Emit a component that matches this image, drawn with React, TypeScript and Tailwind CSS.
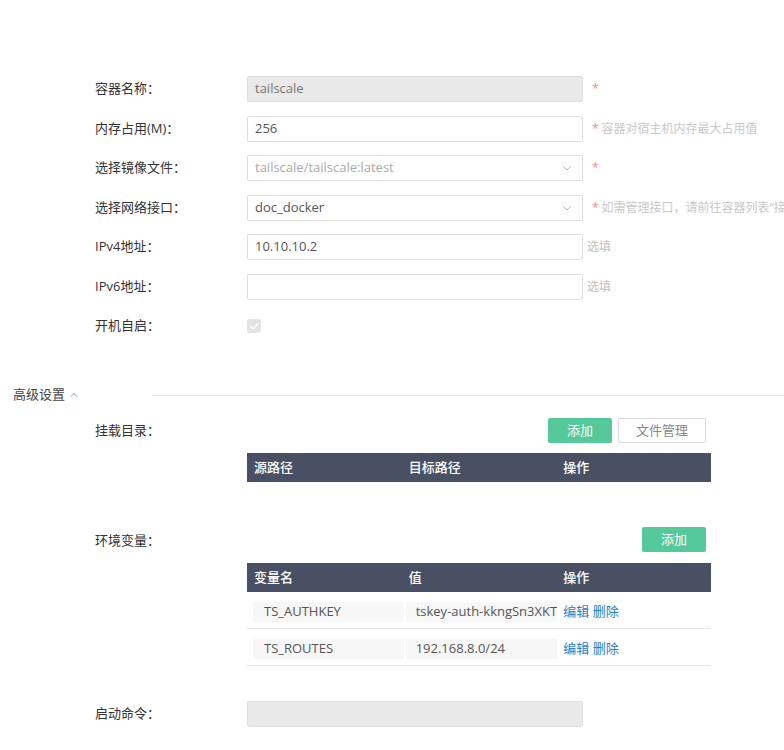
import { ChevronDown, ChevronUp, Check } from 'lucide-react';

const font = { fontFamily: '"Open Sans", "Noto Sans CJK SC", sans-serif' };

function Row({ label, children }: { label: string; children: React.ReactNode }) {
    return (
        <div className="flex h-[26px] items-center whitespace-nowrap">
            <div className="w-[152px] shrink-0 text-[13px] text-[#333]">{label}</div>
            {children}
        </div>
    );
}

function Req({ text }: { text?: string }) {
    return (
        <span className="ml-[9px] text-[12px] text-[#c8c8c8]">
            <span className="text-[#f78989]">*</span>
            {text && <span className="ml-[3px]">{text}</span>}
        </span>
    );
}

function Box({ value, disabled, select, dim }: { value?: string; disabled?: boolean; select?: boolean; dim?: boolean }) {
    return (
        <div
            className={`flex h-[26px] w-[336px] shrink-0 items-center justify-between rounded-[2px] border border-[#dedede] px-[7px] text-[13px] ${
                disabled ? 'bg-[#e9e9e9] text-[#777]' : 'bg-white'
            } ${dim ? 'text-[#aaa]' : 'text-[#555]'}`}
        >
            <span>{value}</span>
            {select && <ChevronDown className="h-4 w-4 text-[#aaa]" strokeWidth={1.2} />}
        </div>
    );
}

function Optional() {
    return <span className="ml-[4px] text-[12px] text-[#c0c0c0]">选填</span>;
}

function GreenBtn() {
    return (
        <button className="h-[25px] w-[64px] rounded-[2px] bg-[#55c99a] text-[13px] text-white">添加</button>
    );
}

function Header({ cols }: { cols: string[] }) {
    return (
        <div className="grid h-[29px] grid-cols-3 items-center bg-[#4a5064] text-[13px] font-medium text-white">
            {cols.map((c) => (
                <div key={c} className="pl-[7px]">{c}</div>
            ))}
        </div>
    );
}

function EnvRow({ name, value }: { name: string; value: string }) {
    return (
        <div className="grid h-[37px] grid-cols-3 items-center border-b border-[#e3e3e3] pt-[3px] text-[13px] text-[#555]">
            <div className="min-w-0 pl-[6px]">
                <div className="flex h-[20px] w-[151px] items-center overflow-hidden whitespace-nowrap bg-[#f7f7f7] pl-[11px]">{name}</div>
            </div>
            <div className="min-w-0 pl-[4px]">
                <div className="flex h-[20px] w-[151px] items-center overflow-hidden whitespace-nowrap bg-[#f7f7f7] pl-[10px]">{value}</div>
            </div>
            <div className="pl-[7px] text-[#1f80cc]">编辑 删除</div>
        </div>
    );
}

export default function App() {
    return (
        <div className="h-[750px] w-[784px] overflow-hidden bg-white" style={font}>
            <div className="flex flex-col gap-[13.5px] pl-[95px] pt-[76px]">
                <Row label="容器名称：">
                    <Box value="tailscale" disabled />
                    <Req />
                </Row>
                <Row label="内存占用(M)：">
                    <Box value="256" />
                    <Req text="容器对宿主机内存最大占用值" />
                </Row>
                <Row label="选择镜像文件：">
                    <Box value="tailscale/tailscale:latest" select dim />
                    <Req />
                </Row>
                <Row label="选择网络接口：">
                    <Box value="doc_docker" select />
                    <Req text="如需管理接口，请前往容器列表“接口管理”中设置" />
                </Row>
                <Row label="IPv4地址：">
                    <Box value="10.10.10.2" />
                    <Optional />
                </Row>
                <Row label="IPv6地址：">
                    <Box />
                    <Optional />
                </Row>
                <Row label="开机自启：">
                    <div className="flex h-[14px] w-[14px] items-center justify-center rounded-[2px] bg-[#e3e3e3]">
                        <Check className="h-[11px] w-[11px] text-white" strokeWidth={3} />
                    </div>
                </Row>
            </div>

            <div className="mt-[46px] flex h-[20px] items-center">
                <div className="flex w-[152px] shrink-0 items-center pl-[13px] text-[13px] text-[#444]">
                    高级设置
                    <ChevronUp className="ml-[3px] h-[12px] w-[12px] text-[#3b8ad9]" strokeWidth={1.6} />
                </div>
                <div className="h-px flex-1 bg-[#e6e6e6]" />
            </div>

            <div className="pl-[95px] pr-[73px]">
                <div className="mt-[13px] flex h-[25px] items-center">
                    <div className="w-[152px] text-[13px] text-[#333]">挂载目录：</div>
                    <div className="flex flex-1 justify-end gap-[6px] pr-[5px]">
                        <GreenBtn />
                        <button className="h-[25px] w-[88px] rounded-[2px] border border-[#dcdcdc] bg-white text-[13px] text-[#888]">
                            文件管理
                        </button>
                    </div>
                </div>
                <div className="mt-[10px] pl-[152px]">
                    <Header cols={['源路径', '目标路径', '操作']} />
                </div>

                <div className="mt-[45px] flex h-[25px] items-center">
                    <div className="w-[152px] pt-[2px] text-[13px] text-[#333]">环境变量：</div>
                    <div className="flex flex-1 justify-end pr-[5px]">
                        <GreenBtn />
                    </div>
                </div>
                <div className="mt-[11px] pl-[152px]">
                    <Header cols={['变量名', '值', '操作']} />
                    <EnvRow name="TS_AUTHKEY" value="tskey-auth-kkngSn3XKT11CNTRL-9xQwLpE2" />
                    <EnvRow name="TS_ROUTES" value="192.168.8.0/24" />
                </div>

                <div className="mt-[35px] flex h-[26px] items-center">
                    <div className="w-[152px] text-[13px] text-[#333]">启动命令：</div>
                    <Box disabled />
                </div>
            </div>
        </div>
    );
}
